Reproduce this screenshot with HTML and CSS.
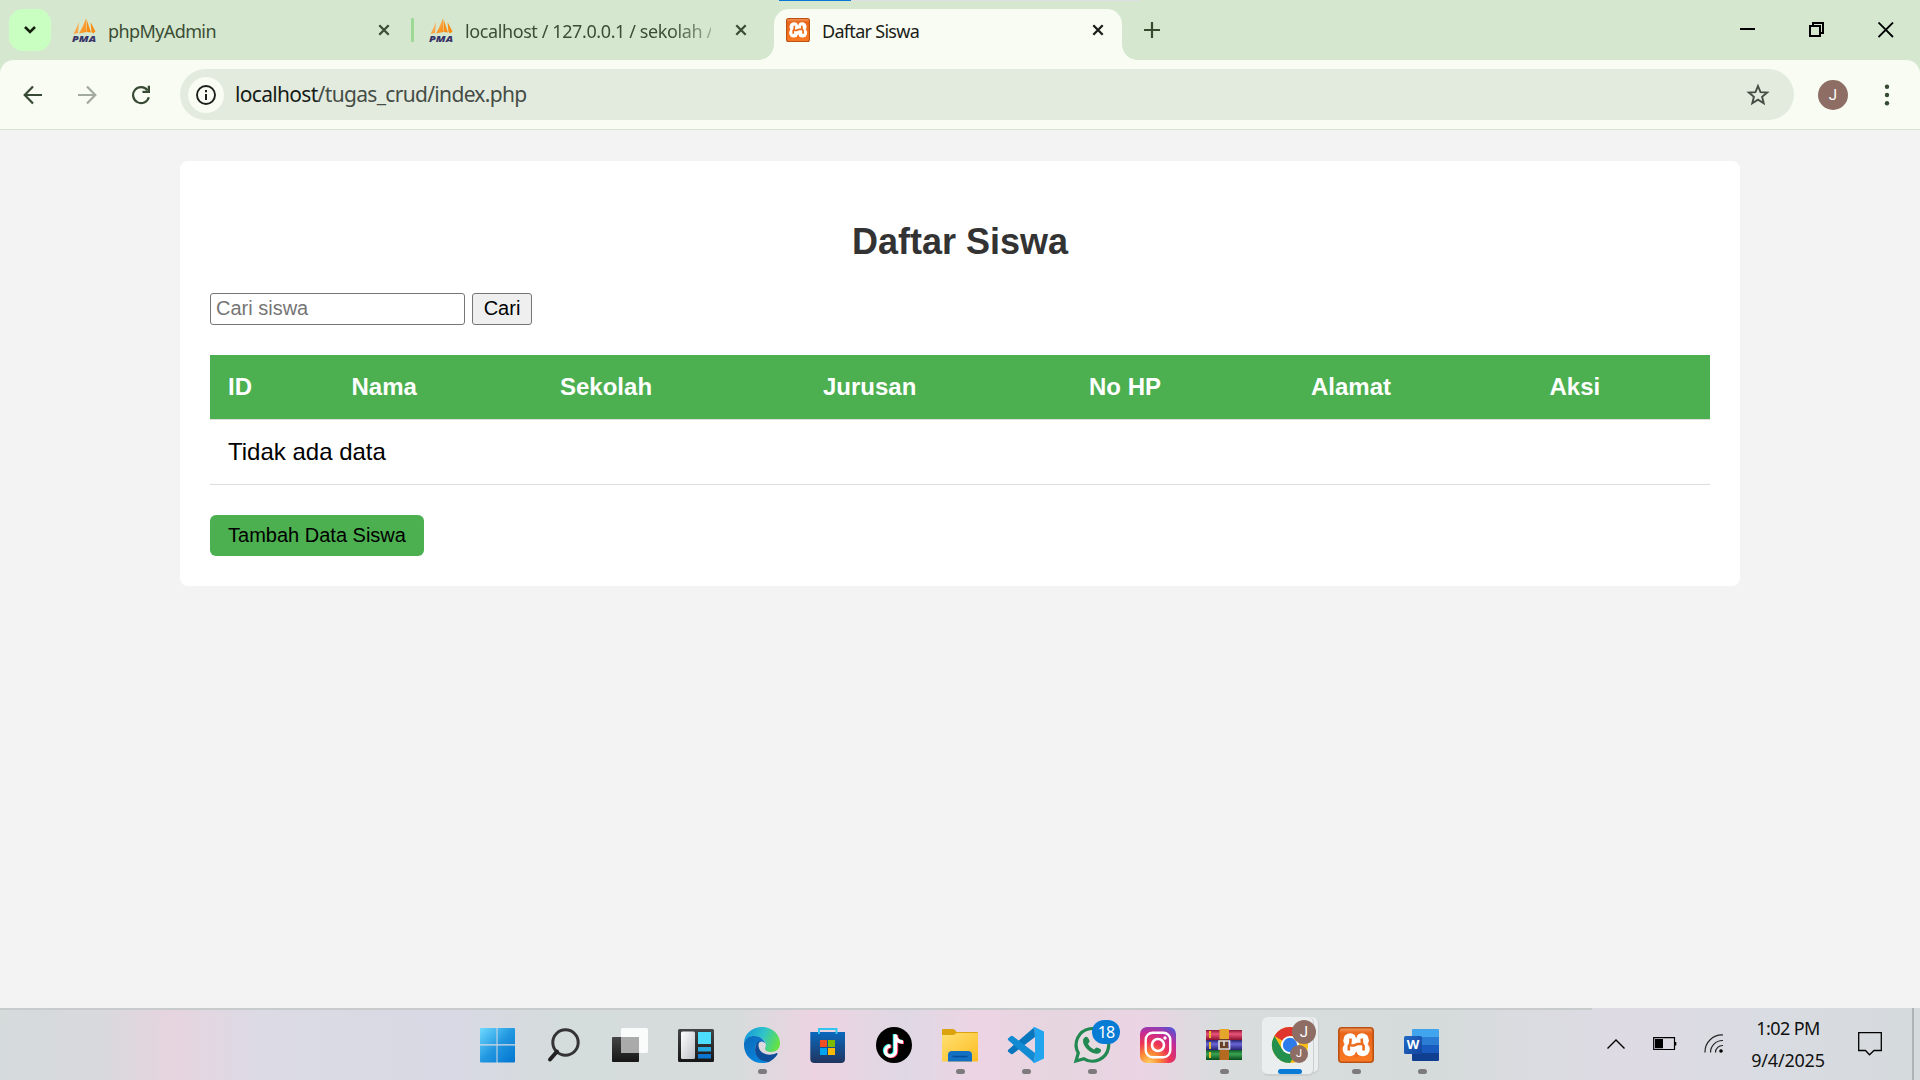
FILE: index.html
```html
<!DOCTYPE html>
<html lang="id">
<head>
<meta charset="utf-8">
<title>Daftar Siswa</title>
<link rel="stylesheet" href="styles.css">
</head>
<body>
<svg class="defs" width="0" height="0" aria-hidden="true">
  <defs>
    <linearGradient id="sail" x1="0" y1="0" x2="1" y2="1"><stop offset="0" stop-color="#fbc48a"/><stop offset="1" stop-color="#f98b0c"/></linearGradient>
    <linearGradient id="xo" x1="0" y1="0" x2="0" y2="1"><stop offset="0" stop-color="#f59a5e"/><stop offset=".16" stop-color="#e8651a"/><stop offset="1" stop-color="#fb7a24"/></linearGradient>
    <linearGradient id="win" gradientUnits="userSpaceOnUse" x1="0" y1="0" x2="36" y2="36"><stop offset="0" stop-color="#70dcff"/><stop offset=".5" stop-color="#2297e0"/><stop offset="1" stop-color="#0073d0"/></linearGradient>
    <linearGradient id="dark" x1="0" y1="0" x2="0" y2="1"><stop offset="0" stop-color="#454545"/><stop offset="1" stop-color="#161616"/></linearGradient>
    <linearGradient id="pane" x1="0" y1="0" x2="1" y2="1"><stop offset="0" stop-color="#fff"/><stop offset="1" stop-color="#bcc0c5"/></linearGradient>
    <linearGradient id="edgeTop" x1="0" y1=".3" x2="1" y2=".6"><stop offset="0" stop-color="#1598dc"/><stop offset=".5" stop-color="#30c4c8"/><stop offset="1" stop-color="#66e33f"/></linearGradient>
    <linearGradient id="edgeLow" x1="0" y1="0" x2=".7" y2="1"><stop offset="0" stop-color="#0c69b8"/><stop offset="1" stop-color="#0787df"/></linearGradient>
    <linearGradient id="store" x1="0" y1="0" x2="0" y2="1"><stop offset="0" stop-color="#0a68bd"/><stop offset="1" stop-color="#213560"/></linearGradient>
    <linearGradient id="folder" x1="0" y1="0" x2="1" y2="1"><stop offset="0" stop-color="#ffe073"/><stop offset="1" stop-color="#fcbd21"/></linearGradient>
    <radialGradient id="ig" cx=".25" cy="1" r="1.15"><stop offset="0" stop-color="#ffd064"/><stop offset=".25" stop-color="#fb8b34"/><stop offset=".5" stop-color="#ee3455"/><stop offset=".75" stop-color="#c42b95"/><stop offset="1" stop-color="#5951d4"/></radialGradient>
    <linearGradient id="red" x1="0" y1="0" x2="0" y2="1"><stop offset="0" stop-color="#8e1434"/><stop offset=".4" stop-color="#e8557a"/><stop offset="1" stop-color="#8b1030"/></linearGradient>
    <linearGradient id="blue" x1="0" y1="0" x2="0" y2="1"><stop offset="0" stop-color="#28246f"/><stop offset=".4" stop-color="#6a66d8"/><stop offset="1" stop-color="#292273"/></linearGradient>
    <linearGradient id="green" x1="0" y1="0" x2="0" y2="1"><stop offset="0" stop-color="#0d5a28"/><stop offset=".4" stop-color="#3ba552"/><stop offset="1" stop-color="#084d1d"/></linearGradient>
    <linearGradient id="word" x1="0" y1="0" x2="1" y2="1"><stop offset="0" stop-color="#2368c5"/><stop offset="1" stop-color="#1245a0"/></linearGradient>
    <symbol id="pma" viewBox="0 0 24 24">
      <path d="M7 3.500C5.500 8 3.500 12 1.500 16L6 15ZM14 0C12 6 9.500 11 7 15.500L14.500 14Z" fill="url(#sail)"/>
      <path d="M14.500 1L19 14.500 15 14ZM18.500 4L23.500 13.500 21 15.500 19.500 14Z" fill="#f98d14"/>
      <text x="0" y="23.500" font-family="Open Sans, sans-serif" font-size="9.500" font-weight="800" font-style="italic" fill="#393568" textLength="24" lengthAdjust="spacingAndGlyphs">PMA</text>
    </symbol>
    <symbol id="xampp" viewBox="0 0 36 36">
      <rect x=".8" y=".8" width="34.400" height="34.400" rx="3" fill="url(#xo)" stroke="#bb5113" stroke-width="1.600"/>
      <g fill="#fff"><circle cx="12.200" cy="13.200" r="6.900"/><circle cx="24" cy="13.200" r="6.900"/><circle cx="11.700" cy="22.300" r="7"/><circle cx="24.700" cy="22.300" r="7"/><path d="M12 12H24V24H12Z"/></g>
      <path d="M12.500 11.500V14.500Q12.500 17 10.800 19V23.500M23.800 11.500V14.500Q23.800 17 25.600 19V23.500M12.500 18.500H16L19.500 17H24" fill="none" stroke="#ea6d1e" stroke-width="2.600"/>
      <path d="M16 6H20.300L18.200 11.500ZM16 30H20.500L18.200 24.500Z" fill="#ef6d20"/>
    </symbol>
    <symbol id="x" viewBox="0 0 12 12"><path d="M1.300 1.300L10.700 10.700M10.700 1.300L1.300 10.700" stroke="currentColor" stroke-width="2.300" fill="none"/></symbol>
  </defs>
</svg>

<header class="browser">
  <div class="tabstrip">
    <i class="loading"></i>
    <button class="tab-search" aria-label="Tabs"><svg width="14" height="10" viewBox="0 0 14 10"><path d="M2 2L7 7L12 2" fill="none" stroke="#15210f" stroke-width="2.600"/></svg></button>
    <div class="tab tab-first"><svg class="fav"><use href="#pma"/></svg><span class="label">phpMyAdmin</span><svg class="close"><use href="#x"/></svg></div>
    <i class="separator"></i>
    <div class="tab tab-second"><svg class="fav"><use href="#pma"/></svg><span class="label fade">localhost / 127.0.0.1 / sekolah /</span><svg class="close"><use href="#x"/></svg></div>
    <div class="tab active"><svg class="fav"><use href="#xampp"/></svg><span class="label">Daftar Siswa</span><svg class="close"><use href="#x"/></svg></div>
    <svg class="plus" width="16" height="16" viewBox="0 0 16 16"><path d="M8 0V16M0 8H16" stroke="#37492f" stroke-width="2.200"/></svg>
    <div class="controls">
      <svg width="16" height="16" viewBox="0 0 16 16"><path d="M0 7H15" stroke="#000" stroke-width="2"/></svg>
      <svg width="16" height="16" viewBox="0 0 16 16"><path d="M1 4H11V14H1ZM4 4V1H14V11H11" fill="none" stroke="#000" stroke-width="2"/></svg>
      <svg width="16" height="16" viewBox="0 0 16 16"><path d="M.5 .5L15 15M15 .5L.5 15" stroke="#000" stroke-width="1.800"/></svg>
    </div>
  </div>
  <div class="toolbar">
    <div class="nav">
      <svg width="20" height="20" viewBox="0 0 20 20"><path d="M19 10H2M10 1.500L1.700 10L10 18.500" fill="none" stroke="#364a34" stroke-width="2.200"/></svg>
      <svg width="20" height="20" viewBox="0 0 20 20"><path d="M1 10H18M10 1.500L18.300 10L10 18.500" fill="none" stroke="#a2a9a0" stroke-width="2.200"/></svg>
      <svg width="20" height="20" viewBox="0 0 20 20"><path d="M17.800 12.200A8 8 0 1 1 16.500 5.300" fill="none" stroke="#364a34" stroke-width="2.200"/><path d="M19 .8V8H11.500V5.800H16.700V.8Z" fill="#364a34"/></svg>
    </div>
    <div class="address">
      <span class="info"><svg width="22" height="22" viewBox="0 0 22 22"><circle cx="11" cy="11" r="9" fill="none" stroke="#1b1e1a" stroke-width="1.900"/><path d="M11 10V16M11 6V8.200" stroke="#1b1e1a" stroke-width="2"/></svg></span>
      <span class="url"><b>localhost</b>/tugas_crud/index.php</span>
      <svg class="star" width="24" height="24" viewBox="0 0 24 24"><path d="M12 3L14.500 9.100 21.200 9.600 16.100 13.800 17.700 20.200 12 16.700 6.300 20.200 7.900 13.800 2.800 9.600 9.500 9.100Z" fill="none" stroke="#454d44" stroke-width="1.900"/></svg>
    </div>
    <span class="avatar">J</span>
    <svg class="menu" width="6" height="22" viewBox="0 0 6 22"><circle cx="3" cy="2.700" r="2.200"/><circle cx="3" cy="11" r="2.200"/><circle cx="3" cy="19.300" r="2.200"/></svg>
  </div>
</header>

<main class="page">
  <section class="card">
    <h2>Daftar Siswa</h2>
    <form class="search"><input type="text" placeholder="Cari siswa"><button type="button">Cari</button></form>
    <table>
      <colgroup><col class="c-id"><col class="c-nama"><col class="c-sekolah"><col class="c-jurusan"><col class="c-hp"><col class="c-alamat"><col class="c-aksi"></colgroup>
      <thead><tr><th>ID</th><th>Nama</th><th>Sekolah</th><th>Jurusan</th><th>No HP</th><th>Alamat</th><th>Aksi</th></tr></thead>
      <tbody><tr><td colspan="7">Tidak ada data</td></tr></tbody>
    </table>
    <button class="add">Tambah Data Siswa</button>
  </section>
</main>

<footer class="taskbar">
  <div class="apps">
    <div class="app"><svg viewBox="0 0 36 36"><path d="M1 1H16.500V17.200H0V2Q0 1 1 1ZM17.500 1H34Q35 1 35 2V17.200H17.500ZM0 18.400H16.500V35.500H1Q0 35.500 0 34.500ZM17.500 18.400H35V34.500Q35 35.500 34 35.500H17.500Z" fill="url(#win)"/></svg></div>
    <div class="app"><svg viewBox="0 0 36 36"><circle cx="19.500" cy="15.500" r="12.700" fill="none" stroke="#343434" stroke-width="3"/><path d="M11 24.500L4 32.500" stroke="#222" stroke-width="4" stroke-linecap="round"/></svg></div>
    <div class="app"><svg viewBox="0 0 36 36"><rect x="0" y="10" width="27" height="25" rx="1" fill="url(#dark)"/><rect x="9" y="1" width="27" height="25" rx="1.500" fill="#fff" opacity=".88"/><rect x="9" y="10" width="18" height="16" fill="#aaa"/></svg></div>
    <div class="app"><svg viewBox="0 0 36 36"><rect y="2" width="36" height="33" rx="1.500" fill="url(#dark)"/><rect x="3" y="4.500" width="14" height="27.500" rx="1.500" fill="url(#pane)"/><path d="M20 5H33V17H20Z" fill="#4cddff"/><path d="M20 20H33V24.500H20Z" fill="#26a9e1"/><path d="M20 27H33V31.500H20Z" fill="#0c76d1"/></svg></div>
    <div class="app run"><svg viewBox="0 0 36 36"><path d="M0 16C0 7 8 0 18 0C29 0 36 8 36 16C36 22 32 25 27 25C22 25 20 23 21.500 20C23 16 20 12 15 10C9 8 3 10 0 16Z" fill="url(#edgeTop)"/><path d="M0 16C3 9 9 8 14 9.500C18 11 21 14 21.500 17C19 13 14 14 12 18C9 25 14 33 24 35.200C11 39 0 30 0 18Z" fill="url(#edgeLow)"/><path d="M12 18C9 25 13 34 24 35.200C28 34 32 30 33.500 27C33.800 26 33 25.500 32 26.300C24 30 15 26 14.500 19C14 15 17 13.500 19 14.500C16 13 13 14.500 12 18Z" fill="#104d98"/></svg></div>
    <div class="app"><svg viewBox="0 0 36 36"><path d="M.3 5H35V32Q35 36 31 36H4.500Q.3 36 .3 32Z" fill="url(#store)"/><path d="M9 7V2H26.500V7" fill="none" stroke="#35c4ed" stroke-width="2"/><path d="M10 13H17V20H10Z" fill="#f25022"/><path d="M18 13H25V20H18Z" fill="#7fba00"/><path d="M10 21H17V28H10Z" fill="#00a4ef"/><path d="M18 21H25V28H18Z" fill="#ffb900"/></svg></div>
    <div class="app"><svg viewBox="0 0 36 36"><circle cx="18" cy="18" r="18"/><g fill="none" stroke-width="3.500"><path d="M18.500 7V23.500A5 5 0 1 1 13.500 18.500M18.500 8.500C19 12.500 22 14.500 26 14.500" stroke="#25f4ee"/><path d="M20.500 8V24.500A5 5 0 1 1 15.500 19.500M20.500 9.500C21 13.500 24 15.500 28 15.500" stroke="#fe2c55"/><path d="M19.500 7.500V24A5 5 0 1 1 14.500 19M19.500 9C20 13 23 15 27 15" stroke="#fff"/></g></svg></div>
    <div class="app run"><svg viewBox="0 0 36 36"><path d="M0 2.500Q0 2 1 2H11Q13 2 14.500 5H35Q36 5 36 6V15H0Z" fill="#dba30d"/><path d="M0 8H11Q13 8 14.500 6H36V34.500H0Z" fill="url(#folder)"/><path d="M6 34.500V28Q6 24 10 24H26Q30 24 30 28V34.500Z" fill="#126fc2"/><path d="M10.500 29.500H25.500" stroke="#064d97" stroke-width="1.500"/></svg></div>
    <div class="app run"><svg viewBox="0 0 36 36"><path d="M26.500 0L0 23Q-.5 24 .5 25L3 27Q4 27.500 5 26.700L27 10Z" fill="#0876bd"/><path d="M26.500 36L0 13Q-.5 12 .5 11L3 9Q4 8.500 5 9.300L27 26Z" fill="#128bd2"/><path d="M26.500 0L36 4.500V31.500L26.500 36Q25.500 36 24.500 34.500L27 33V3L24.500 1.500Q25.500 0 26.500 0Z" fill="#23a4ef"/></svg></div>
    <div class="app run"><svg viewBox="0 0 36 36"><path d="M2 34L4.300 26A16.300 16.300 0 1 1 10 31.800Z" fill="#e7f1e8" fill-opacity=".25" stroke="#218951" stroke-width="3.200"/><path d="M10 11Q13 8.500 14.500 11.500L15.700 14.300L14 17Q16 21 20 22.500L22.300 20.500Q27 21.500 27.200 23.500Q26 27 22.500 26.800C15 26 9 19 9 14Q9 12 10 11Z" fill="#218951"/></svg><span class="count">18</span></div>
    <div class="app"><svg viewBox="0 0 36 36"><rect width="36" height="36" rx="7" fill="url(#ig)"/><rect x="5.700" y="5.700" width="24.600" height="24.600" rx="7" fill="none" stroke="#fff" stroke-width="2.400"/><circle cx="18" cy="18" r="6" fill="none" stroke="#fff" stroke-width="2.600"/><circle cx="25" cy="11" r="1.700" fill="#fff"/></svg></div>
    <div class="app run"><svg viewBox="0 0 36 36"><path d="M0 3H36V13H0Z" fill="url(#red)"/><path d="M0 13H36V23H0Z" fill="url(#blue)"/><path d="M0 23H36V33H0Z" fill="url(#green)"/><path d="M3 4H5V11H3ZM3 15H5V22H3ZM3 25H5V31H3Z" fill="#e9be22"/><path d="M13.500 2H23V12H13.500Z" fill="#e4a72b"/><path d="M13.500 22H23V33H13.500Z" fill="#b46b21"/><path d="M14 12H22V23H14Z" fill="#684126"/><path d="M13 14H23.500V22H13ZM18 14V19" fill="none" stroke="#ddd" stroke-width="1.700"/></svg></div>
    <div class="app chrome"><span class="stack"></span><svg viewBox="0 0 36 36"><circle cx="18" cy="18" r="18" fill="#f9bd13"/><path d="M18 18L2.400 9A18 18 0 0 1 33.600 9H18Z" fill="#df352e"/><path d="M2.400 9A18 18 0 0 0 18 36L25.800 22.500L18 18L10.200 22.500Z" fill="#23904d"/><circle cx="18" cy="18" r="9" fill="#fff"/><circle cx="18" cy="18" r="7.200" fill="#2e7cec"/></svg><span class="face big">J</span><span class="face small">J</span></div>
    <div class="app run"><svg viewBox="0 0 36 36"><use href="#xampp"/></svg></div>
    <div class="app run"><svg viewBox="0 0 36 36"><path d="M8 3Q8 2 9 2H34Q35 2 35 3V10H8Z" fill="#41a5ee"/><path d="M8 10H35V18H8Z" fill="#2b7cd3"/><path d="M8 18H35V26H8Z" fill="#185abd"/><path d="M8 26H35V33Q35 34 34 34H9Q8 34 8 33Z" fill="#103f91"/><rect y="9" width="18" height="18" rx="1.500" fill="url(#word)"/><text x="9" y="22.300" text-anchor="middle" font-family="Open Sans, sans-serif" font-size="13" font-weight="700" fill="#fff">W</text></svg></div>
  </div>
  <div class="tray">
    <svg width="18" height="10" viewBox="0 0 18 10"><path d="M.5 9.500L9 1L17.500 9.500" fill="none" stroke="#000" stroke-width="1.400"/></svg>
    <svg width="24" height="14" viewBox="0 0 24 14"><path d="M.7 .7H21.500V12.500H.7Z" fill="none" stroke="#000" stroke-width="1.200"/><path d="M2 2H10V11.200H2ZM22 5H23.300V8.500H22Z"/></svg>
    <svg width="20" height="20" viewBox="0 0 20 20"><path d="M1 18.500A17 17 0 0 1 19 1M6.500 18.500A12 12 0 0 1 19 6.500M11.500 18.500A7 7 0 0 1 19 11.500" fill="none" stroke="#222" stroke-width="1.200"/><circle cx="17" cy="17" r="1.800"/></svg>
    <div class="clock"><span>1:02 PM</span><span class="date">9/4/2025</span></div>
    <svg width="24" height="24" viewBox="0 0 24 24"><path d="M.7 .7H23.300V18.500H16L11.500 22.800L7.500 18.500H.7Z" fill="none" stroke="#000" stroke-width="1.300"/></svg>
    <i class="peek"></i>
  </div>
</footer>
</body>
</html>
```
FILE: styles.css
```css
* { box-sizing: border-box; }
body { margin: 0; width: 1920px; height: 1080px; overflow: hidden; display: flex; flex-direction: column; background: #f3f3f3; font-family: "Liberation Sans", Arial, sans-serif; }
.defs { position: absolute; }
svg { display: block; flex: none; }

/* Browser chrome */
.browser { height: 130px; background: #d5e8cf; font-family: "Noto Sans", "Open Sans", sans-serif; }
.tabstrip { height: 60px; padding: 9px 26px 0 9px; display: flex; align-items: flex-start; position: relative; }
.loading { position: absolute; left: 779px; top: 0; width: 362px; height: 1px; background: linear-gradient(90deg, #0878d4 72px, #dedfe2 72px); }
.tab-search { width: 42px; height: 42px; border: 0; border-radius: 14px; padding: 0; background: #c9ffc1; display: flex; align-items: center; justify-content: center; }
.tab { height: 51px; padding-bottom: 9px; display: flex; align-items: center; color: #3b4d35; }
.tab-first { width: 339px; margin-left: 21px; }
.tab-second { width: 321px; margin-left: 15px; }
.fav { width: 24px; height: 24px; margin-right: 12px; }
.label { flex: 1; font-size: 18px; line-height: 26px; letter-spacing: -.6px; white-space: nowrap; padding-top: 2px; }
.fade { flex: none; width: 246px; margin-right: 24px; letter-spacing: -.4px; -webkit-mask-image: linear-gradient(90deg, #000 205px, transparent 270px); mask-image: linear-gradient(90deg, #000 205px, transparent 270px); }
.active .label { letter-spacing: -.7px; }
.close { width: 12px; height: 12px; }
.tab-first .close { margin-right: 21px; }
.separator { width: 3px; height: 24px; margin: 9px 0 0; border-radius: 1px; background: #9bd995; }
.active { width: 348px; margin-left: 24px; padding: 0 18px 9px 12px; border-radius: 15px 15px 0 0; background: #f8fcf2; color: #1a1d19; position: relative; }
.active::before, .active::after { content: ""; position: absolute; bottom: 0; width: 15px; height: 15px; }
.active::before { left: -15px; background: radial-gradient(circle at 0 0, transparent 14.5px, #f8fcf2 15px); }
.active::after { right: -15px; background: radial-gradient(circle at 100% 0, transparent 14.5px, #f8fcf2 15px); }
.plus { margin: 13px 0 0 22px; }
.controls { margin-left: auto; display: flex; gap: 53px; padding-top: 13px; }
.toolbar { height: 70px; padding: 9px 30px 9px 23px; display: flex; align-items: center; background: #f8fcf2; border-bottom: 1px solid #dce2d5; border-radius: 14px 14px 0 0; }
.nav { display: flex; gap: 34px; width: 157px; }
.address { width: 1614px; height: 51px; border-radius: 26px; padding: 0 24px 0 8px; display: flex; align-items: center; background: #e3ebdf; }
.info { width: 36px; height: 36px; border-radius: 50%; background: #f8fcf2; display: flex; align-items: center; justify-content: center; }
.url { margin-left: 11px; margin-top: -1px; font-size: 21px; letter-spacing: -.68px; color: #454d46; }
.url b { font-weight: 400; color: #161c17; }
.star { margin-left: auto; }
.avatar { width: 30px; height: 30px; margin-left: 24px; border-radius: 50%; background: #8e6e64; color: #fff; font: 15px/30px Roboto, sans-serif; text-align: center; }
.menu { margin-left: auto; fill: #364a34; }

/* Page */
.page { flex: 1; padding-top: 31px; }
.card { width: 1560px; height: 425px; margin: 0 auto; padding: 30px; border-radius: 8px; background: #fff; }
h2 { margin: 30px 0; font-size: 36px; line-height: 42px; text-align: center; color: #333; }
.search { display: flex; gap: 7px; margin-bottom: 30px; }
.search input, .search button { height: 32px; border: 1px solid #767676; border-radius: 3px; font: 20px "Liberation Sans", Arial, sans-serif; }
.search input { width: 255px; padding: 0 5px 1px; }
.search input::placeholder { color: #757575; }
.search button { width: 60px; padding: 0 0 1px; background: #efefef; color: #000; }
table { width: 1500px; table-layout: fixed; border-spacing: 0; font-size: 24px; line-height: 28px; text-align: left; }
th, td { height: 65px; padding: 0 18px; border-bottom: 1px solid #ddd; }
th { background: #4caf50; background-clip: padding-box; color: #fff; }
.c-id { width: 123.5px; } .c-nama { width: 208.5px; } .c-sekolah { width: 263px; } .c-jurusan { width: 266px; }
.c-hp { width: 222px; } .c-alamat { width: 238.5px; } .c-aksi { width: 178.5px; }
.add { display: block; width: 214px; height: 41px; margin-top: 30px; padding: 0; border: 0; border-radius: 6px; background: #4caf50; color: #000; font: 20px "Liberation Sans", Arial, sans-serif; }

/* Taskbar */
.taskbar { height: 72px; display: flex; justify-content: space-between; padding-left: 465px; font-family: "Noto Sans", "Open Sans", sans-serif;
  background: linear-gradient(#c8cbcb, #c8cbcb) 0 0 / 1592px 2px no-repeat, linear-gradient(90deg, #d5dadb 0, #d8d9dd 100px, #e6d4df 170px, #dbdae5 260px, #d8d9e4 460px, #d5dcdc 560px, #d6dcdb 735px, #edd3e2 815px, #dfd8e4 905px, #edd4e4 980px, #e5d5df 1060px, #ebd4e4 1140px, #d8dcdd 1215px, #d5dbda 1440px, #dadbe1 1530px, #dedae3 1640px, #d9dce2 1760px, #d5dadd 1920px); }
.apps { display: flex; }
.app { width: 66px; height: 72px; padding: 19px 15px; position: relative; }
.app svg { width: 36px; height: 36px; overflow: visible; position: relative; }
.run::after, .chrome::after { content: ""; position: absolute; left: 29px; bottom: 6px; width: 9px; height: 5px; border-radius: 3px; background: #7c7a7c; }
.chrome::after { left: 21px; width: 24px; background: #087bd7; }
.chrome::before, .stack { content: ""; position: absolute; left: 5px; top: 9px; width: 51px; height: 57px; border-radius: 6px; background: #ebeeee; border-right: 1px solid #cbcfd0; border-bottom: 2px solid #cbcfd0; }
.stack { left: 11px; z-index: -1; }
.chrome { z-index: 0; }
.count, .face { position: absolute; border-radius: 50%; text-align: center; color: #fff; }
.count { left: 33px; top: 12px; width: 28px; height: 24px; border-radius: 12px; background: #087bd4; font-size: 16px; line-height: 24px; letter-spacing: -.8px; }
.face { background: #8e6e64; font-family: Roboto, sans-serif; }
.big { left: 35px; top: 12px; width: 24px; height: 24px; font-size: 15px; line-height: 24px; }
.small { left: 33px; top: 37px; width: 18px; height: 18px; font-size: 11px; line-height: 18px; }
.tray { width: 313px; display: flex; align-items: center; }
.tray > svg:nth-child(2) { margin-left: 28px; }
.tray > svg:nth-child(3) { margin-left: 27px; }
.clock { width: 90px; margin: 0 25px 0 19px; display: flex; flex-direction: column; text-align: center; font-size: 18px; line-height: 32px; letter-spacing: -.6px; color: #111; }
.date { letter-spacing: -.2px; }
.peek { width: 8px; height: 72px; margin-left: auto; border-left: 2px solid #aeb3b5; }
```
